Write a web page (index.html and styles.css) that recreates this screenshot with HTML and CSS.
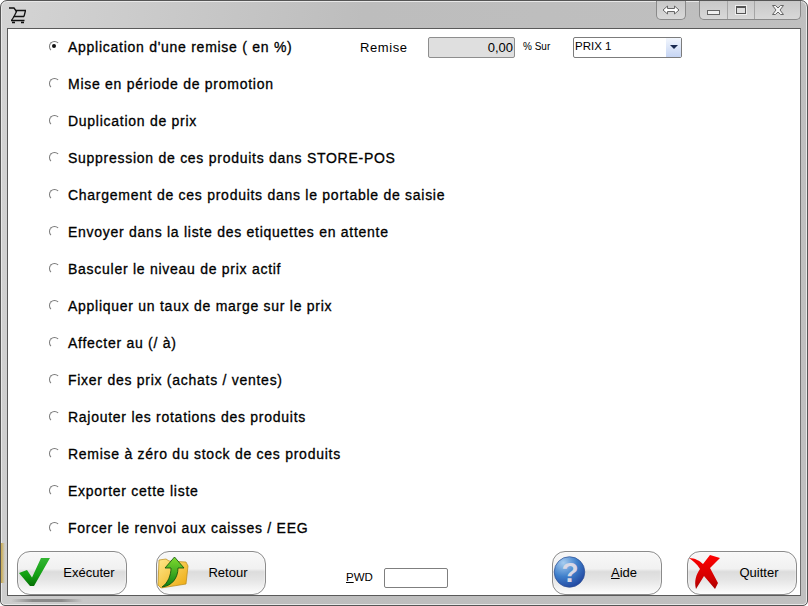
FILE: index.html
```html
<!DOCTYPE html>
<html lang="fr">
<head>
<meta charset="utf-8">
<title>Actions</title>
<link rel="stylesheet" href="styles.css">
</head>
<body>
<div class="window">
  <header class="titlebar">
    <svg class="cart" width="17" height="17" viewBox="0 0 17 17" fill="none" stroke="#111" stroke-width="1.3">
      <path d="M0 1h5l2.500 3.500L5 9.500H15"/><path d="M6 3.500h10.500l-1.500 6"/><path d="M2 13.500h13.500M3 15.500h3M12 15.500h3" stroke-width="1.600"/><path d="M5 9.500L2.500 13.500"/>
    </svg>
    <div class="caption-tools">
      <div class="cap-group cap-swap">
        <svg width="18" height="10" viewBox="0 0 18 10" fill="#fff" stroke="#666"><path d="M1 5l4.500-4v2.500h7V1L17 5l-4.500 4V6.500h-7V9z"/></svg>
      </div>
      <div class="cap-group cap-win">
        <div class="cap-btn cap-min"><span class="min-glyph"></span></div>
        <div class="cap-btn cap-max"><span class="max-glyph"></span></div>
        <div class="cap-btn cap-close">
          <svg width="12" height="10" viewBox="0 0 12 10" fill="#f4f4f4" stroke="#666"><path d="M.5.500h3L6 3 8.500.500h3L8 5l3.500 4.500h-3L6 7 3.500 9.500h-3L4 5z"/></svg>
        </div>
      </div>
    </div>
  </header>
  <main class="panel">
    <form class="options">
      <label class="row">
        <input class="radio" type="radio" name="op" checked>
        <span class="opt-text opt-first">Application d'une remise ( en %)</span>
        <span class="remise-label">Remise</span>
        <span class="remise-value">0,00</span>
        <span class="sur-label">% Sur</span>
        <span class="select"><span class="select-value">PRIX 1</span><span class="select-arrow"></span></span>
      </label>
      <label class="row"><input class="radio" type="radio" name="op"><span class="opt-text">Mise en période de promotion</span></label>
      <label class="row"><input class="radio" type="radio" name="op"><span class="opt-text">Duplication de prix</span></label>
      <label class="row"><input class="radio" type="radio" name="op"><span class="opt-text">Suppression de ces produits dans STORE-POS</span></label>
      <label class="row"><input class="radio" type="radio" name="op"><span class="opt-text">Chargement de ces produits dans le portable de saisie</span></label>
      <label class="row"><input class="radio" type="radio" name="op"><span class="opt-text">Envoyer dans la liste des etiquettes en attente</span></label>
      <label class="row"><input class="radio" type="radio" name="op"><span class="opt-text">Basculer le niveau de prix actif</span></label>
      <label class="row"><input class="radio" type="radio" name="op"><span class="opt-text">Appliquer un taux de marge sur le prix</span></label>
      <label class="row"><input class="radio" type="radio" name="op"><span class="opt-text">Affecter au (/ à)</span></label>
      <label class="row"><input class="radio" type="radio" name="op"><span class="opt-text">Fixer des prix (achats / ventes)</span></label>
      <label class="row"><input class="radio" type="radio" name="op"><span class="opt-text">Rajouter les rotations des produits</span></label>
      <label class="row"><input class="radio" type="radio" name="op"><span class="opt-text">Remise à zéro du stock de ces produits</span></label>
      <label class="row"><input class="radio" type="radio" name="op"><span class="opt-text">Exporter cette liste</span></label>
      <label class="row"><input class="radio" type="radio" name="op"><span class="opt-text">Forcer le renvoi aux caisses / EEG</span></label>
    </form>
    <footer class="actions">
      <div class="btn btn-run">
        <svg class="btn-icon" width="38" height="34" viewBox="0 0 38 34">
          <defs><linearGradient id="gc" x1="0" y1="0" x2="0" y2="1"><stop offset="0" stop-color="#34b534"/><stop offset=".6" stop-color="#12a012"/><stop offset="1" stop-color="#067006"/></linearGradient></defs>
          <path d="M0 17l8-3 5 7.500L22 2h9L15 30h-4z" fill="url(#gc)"/>
        </svg>
        <span class="btn-label">Exécuter</span>
      </div>
      <div class="btn btn-back">
        <svg class="btn-icon" width="38" height="34" viewBox="0 0 38 34">
          <defs><linearGradient id="gf" x1="0" y1="0" x2="1" y2="1"><stop offset="0" stop-color="#ffe88a"/><stop offset="1" stop-color="#eda80c"/></linearGradient>
          <linearGradient id="ga" x1="0" y1="0" x2="0" y2="1"><stop offset="0" stop-color="#7fdc2f"/><stop offset="1" stop-color="#0d7f14"/></linearGradient></defs>
          <path d="M1 4l7-1 3 2 17 1 2 4-2 18L3 32l-3-3z" fill="url(#gf)" stroke="#b98a17" stroke-width=".7"/>
          <path d="M4 31C10 27 13 19 13 12H7L16.500 1 26 12h-6C20 22 14 30 4 31z" fill="url(#ga)" stroke="#0a4d0a" stroke-width=".8"/>
        </svg>
        <span class="btn-label">Retour</span>
      </div>
      <div class="pwd">
        <span class="pwd-label"><u>P</u>WD</span>
        <span class="pwd-input"></span>
      </div>
      <div class="btn btn-help">
        <svg class="btn-icon" width="38" height="34" viewBox="0 0 38 34">
          <defs><radialGradient id="gq" cx=".3" cy=".2" r=".9"><stop offset="0" stop-color="#a7cdf0"/><stop offset=".5" stop-color="#3f7fcb"/><stop offset="1" stop-color="#1d3f9a"/></radialGradient></defs>
          <circle cx="15.500" cy="16" r="15.300" fill="url(#gq)" stroke="#2c4f93" stroke-width=".7"/>
          <text x="16" y="26" class="q-mark" text-anchor="middle">?</text>
        </svg>
        <span class="btn-label"><u>A</u>ide</span>
      </div>
      <div class="btn btn-quit">
        <svg class="btn-icon" width="38" height="36" viewBox="0 0 38 36">
          <defs><linearGradient id="gx" x1="0" y1="0" x2="0" y2="1"><stop offset="0" stop-color="#f00"/><stop offset=".7" stop-color="#d00000"/><stop offset="1" stop-color="#a80000"/></linearGradient></defs>
          <path d="M0 3C6 3 11 6 14 9L21 0l10 3-10 10 8 15-3 6-11-13-8 13C5 26 7 20 11 14 8 9 4 6 0 3z" fill="url(#gx)"/>
        </svg>
        <span class="btn-label">Quitter</span>
      </div>
    </footer>
  </main>
</div>
</body>
</html>
```

FILE: styles.css
```css
html, body {
  margin: 0;
  height: 100%;
  background: #fff;
  overflow: hidden;
}
.window {
  position: relative;
  box-sizing: border-box;
  width: 808px;
  height: 606px;
  display: flex;
  flex-direction: column;
  padding: 0 6px 9px 6px;
  border: 1px solid #555;
  border-radius: 7px 7px 5px 5px;
  background: linear-gradient(100deg, #d4d4d4 0%, #bdbdbd 40%, #c0c0c0 100%);
  box-shadow: inset 0 0 0 1px #e8e8e8;
  font-family: "Liberation Sans", Arial, sans-serif;
  color: #000;
}
.window::before {
  content: "";
  position: absolute;
  left: 0;
  top: 542px;
  width: 4px;
  height: 40px;
  background: linear-gradient(90deg, #c9a94a, rgba(201, 169, 74, 0));
}
.window::after {
  content: "";
  position: absolute;
  left: 10px;
  bottom: 3px;
  width: 72px;
  height: 3px;
  background: linear-gradient(90deg, rgba(110, 110, 110, 0), #8a8a8a 30%, #8a8a8a 70%, rgba(110, 110, 110, 0));
}
.titlebar {
  height: 27px;
  flex: none;
  display: flex;
  justify-content: space-between;
  align-items: flex-start;
}
.cart { margin: 6px 0 0 2px; }
.caption-tools {
  display: flex;
  gap: 13px;
}
.cap-group {
  height: 19px;
  box-sizing: border-box;
  display: flex;
  align-items: center;
  justify-content: center;
  border: 1px solid #8a8a8a;
  border-top: 0;
  border-radius: 0 0 5px 5px;
  background: linear-gradient(#c8c8c8, #d8d8d8);
}
.cap-swap { width: 30px; }
.cap-win { width: 102px; justify-content: flex-start; }
.cap-btn {
  height: 100%;
  display: flex;
  align-items: center;
  justify-content: center;
  box-sizing: border-box;
}
.cap-min { width: 28px; border-right: 1px solid #a5a5a5; }
.cap-max { width: 27px; border-right: 1px solid #a5a5a5; }
.cap-close { flex: 1; }
.min-glyph {
  width: 11px;
  height: 3px;
  margin-top: 5px;
  border: 1px solid #666;
  background: #f0f0f0;
}
.max-glyph {
  width: 8px;
  height: 5px;
  border: 1px solid #555;
  border-width: 2px 1px 1px;
  outline: 1px solid #eee;
  background: #e0e0e0;
}
.panel {
  flex: 1;
  display: flex;
  flex-direction: column;
  background: #fff;
  border: 1px solid #5a5a5a;
  border-right-color: #707070;
}
.options { display: flex; flex-direction: column; }
.row {
  height: 37px;
  display: flex;
  align-items: center;
  padding-left: 41px;
}
.radio {
  appearance: none;
  -webkit-appearance: none;
  box-sizing: border-box;
  position: relative;
  width: 11px;
  height: 11px;
  margin: 0 8px 0 0;
  flex: none;
  border-radius: 50%;
  border: 1.500px solid;
  border-color: #7a7a7a transparent transparent #7a7a7a;
  transform: translateY(-1px);
}
.radio:checked::after {
  content: "";
  position: absolute;
  left: 2px;
  top: 2px;
  width: 4px;
  height: 4px;
  border-radius: 50%;
  background: #111;
}
.opt-text {
  padding-bottom: 2px;
  font-size: 14px;
  -webkit-text-stroke: 0.3px #000;
  letter-spacing: 0.73px;
  white-space: nowrap;
}
.opt-first { width: 292px; }
.remise-label { width: 68px; font-size: 13px; letter-spacing: 0.6px; }
.remise-value {
  box-sizing: border-box;
  width: 87px;
  height: 21px;
  padding-right: 1px;
  line-height: 20px;
  text-align: right;
  font-size: 13px;
  background: #dfdfdf;
  border: 1px solid #8e8e8e;
  border-radius: 2px;
}
.sur-label { margin-left: 8px; width: 50px; font-size: 10px; transform: translateY(-1px); }
.select {
  box-sizing: border-box;
  width: 109px;
  height: 21px;
  display: flex;
  justify-content: space-between;
  border: 1px solid #7c7c7c;
  border-radius: 2px;
  font-size: 11.500px;
  background: #fff;
}
.select-value { padding: 2px 0 0 1px; }
.select-arrow {
  width: 15px;
  background: linear-gradient(#f2f6fd, #c6d5f3);
  position: relative;
}
.select-arrow::after {
  content: "";
  position: absolute;
  left: 4px;
  top: 7px;
  border: 4px solid transparent;
  border-top: 4px solid #1a2a50;
  border-bottom: 0;
}
.actions {
  flex: 1;
  display: flex;
  align-items: flex-start;
  padding: 4px 3px 0 9px;
}
.btn {
  box-sizing: border-box;
  width: 110px;
  height: 44px;
  flex: none;
  display: flex;
  align-items: center;
  padding: 0 5px 0 1px;
  border: 1px solid #8b8b8b;
  border-radius: 13px;
  background: linear-gradient(#f8f8f8 0%, #f1f1f1 40%, #dcdcdc 47%, #e4e4e4 65%, #fdfdfd 100%);
  box-shadow: inset 0 0 2px #fff;
  font-size: 13px;
}
.btn-icon { flex: none; overflow: visible; }
.btn-label { flex: 1; padding-bottom: 2px; text-align: center; }
.btn-run { margin-right: 29px; }
.pwd {
  display: flex;
  align-items: center;
  width: 286px;
  flex: none;
  margin-top: 17px;
  padding-left: 80px;
  box-sizing: border-box;
  font-size: 11.500px;
}
.pwd-label { width: 38px; padding-bottom: 2px; }
.pwd-input {
  box-sizing: border-box;
  width: 64px;
  height: 20px;
  border: 1px solid #7f7f7f;
  border-radius: 2px;
  background: #fff;
}
.btn-help { margin-right: 25px; }
.q-mark {
  font-family: "Liberation Sans", Arial, sans-serif;
  font-size: 28px;
  font-weight: 700;
  fill: #d8d8e6;
}
```
